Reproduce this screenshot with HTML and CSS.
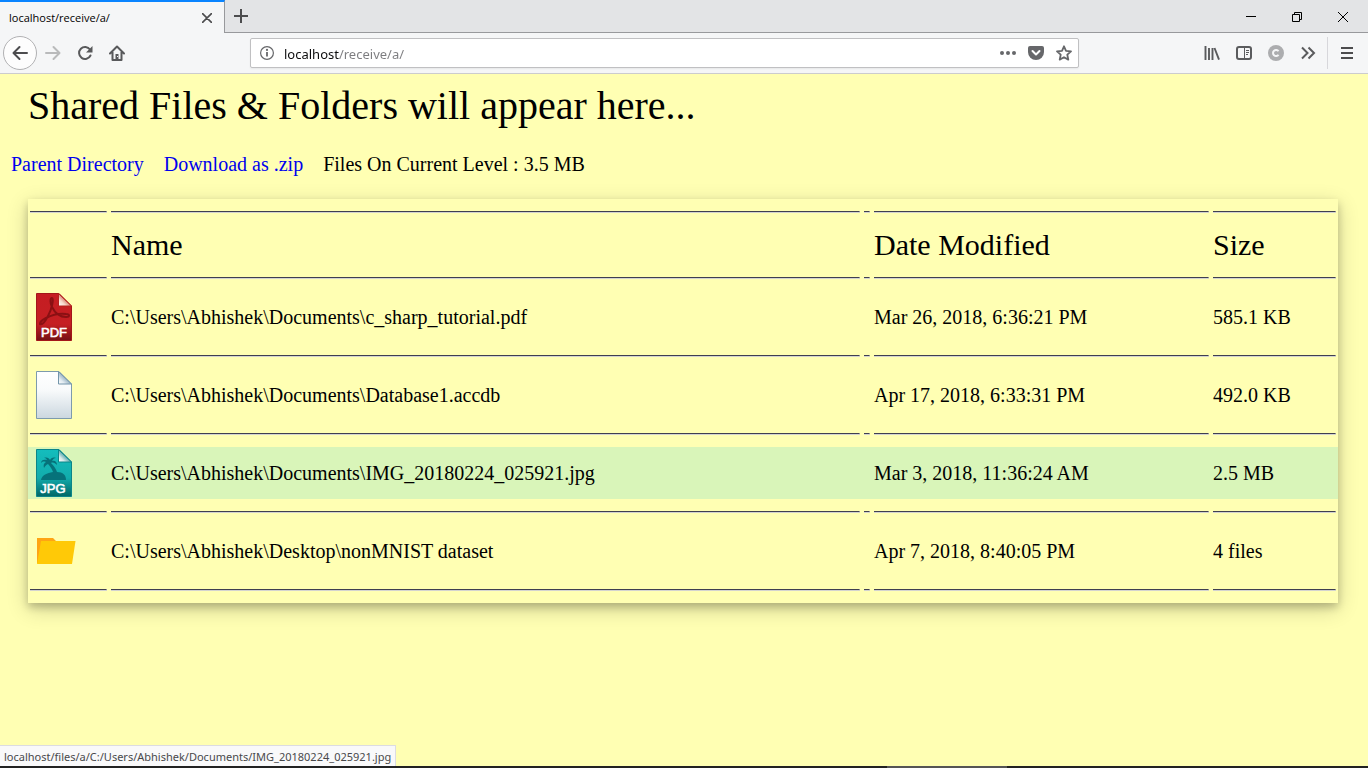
FILE: index.html
```html
<!DOCTYPE html>
<html lang="en">
<head>
<meta charset="utf-8">
<title>localhost/receive/a/</title>
<link rel="stylesheet" href="styles.css">
</head>
<body>
<header class="browser">
  <div class="tabstrip">
    <div class="tab">
      <span class="tab-title">localhost/receive/a/</span>
      <button class="icon-button tab-close" aria-label="Close tab"><svg width="10" height="10" viewBox="0 0 10 10"><path d="M.5.5l9 9M9.500.5l-9 9" stroke="#4c4c4e" stroke-width="1.600" fill="none" stroke-linecap="round"/></svg></button>
    </div>
    <button class="icon-button new-tab" aria-label="New tab"><svg width="14" height="14" viewBox="0 0 14 14"><path d="M7 0v14M0 7h14" stroke="#4c4c4e" stroke-width="2" fill="none"/></svg></button>
    <div class="window-controls">
      <button class="window-button" aria-label="Minimize"><svg width="10" height="10" viewBox="0 0 10 10"><path d="M0 4.500h10" stroke="#000" fill="none"/></svg></button>
      <button class="window-button" aria-label="Restore"><svg width="10" height="10" viewBox="0 0 10 10"><path d="M.5 2.500h7v7h-7zM2.500 2.500v-2h7v7h-2" stroke="#000" fill="none"/></svg></button>
      <button class="window-button" aria-label="Close"><svg width="10" height="10" viewBox="0 0 10 10"><path d="M0 0l10 10M10 0L0 10" stroke="#000" fill="none"/></svg></button>
    </div>
  </div>
  <div class="toolbar">
    <div class="nav">
      <button class="icon-button back" aria-label="Back"><svg width="16" height="16" viewBox="0 0 16 16"><path d="M15 8H2M7.500 2L1.500 8l6 6" stroke="#4c4c4e" stroke-width="2" fill="none" stroke-linecap="round" stroke-linejoin="round"/></svg></button>
      <button class="icon-button" aria-label="Forward" disabled><svg width="16" height="16" viewBox="0 0 16 16"><path d="M1 8h13M8.500 2l6 6-6 6" stroke="#b9babb" stroke-width="2" fill="none" stroke-linecap="round" stroke-linejoin="round"/></svg></button>
      <button class="icon-button" aria-label="Reload"><svg width="16" height="16" viewBox="0 0 16 16"><path d="M13 4.500A6 6 0 1 0 13.500 10.500" stroke="#58595b" stroke-width="2" fill="none" stroke-linecap="round"/><path d="M15.500 1v6.500H9z" fill="#58595b"/></svg></button>
      <button class="icon-button" aria-label="Home"><svg width="16" height="16" viewBox="0 0 16 16"><path d="M1 8.500l7-7 7 7M3.500 7v8h9V7" stroke="#58595b" stroke-width="2" fill="none" stroke-linecap="round" stroke-linejoin="round"/><path d="M6.500 9h3v6h-3z" fill="#58595b"/><path d="M8.500 11v1" stroke="#f5f6f7"/></svg></button>
    </div>
    <div class="urlbar">
      <svg width="14" height="14" viewBox="0 0 14 14"><circle cx="7" cy="7" r="6.400" fill="none" stroke="#66676a" stroke-width="1.200"/><path d="M7 6v4.500" stroke="#66676a" stroke-width="1.800"/><circle cx="7" cy="3.900" r="1.100" fill="#66676a"/></svg>
      <input class="url" type="text" aria-label="Address" value="localhost/receive/a/">
      <button class="icon-button page-action" aria-label="Page actions"><svg width="16" height="16" viewBox="0 0 16 16"><g fill="#66676a"><circle cx="2" cy="8" r="2"/><circle cx="8" cy="8" r="2"/><circle cx="14" cy="8" r="2"/></g></svg></button>
      <button class="icon-button page-action" aria-label="Save to Pocket"><svg width="16" height="16" viewBox="0 0 16 16"><path d="M2 1h12a2 2 0 0 1 2 2v4a8 8 0 0 1-16 0V3a2 2 0 0 1 2-2z" fill="#66676a"/><path d="M4.500 6L8 9.500 11.500 6" stroke="#fff" stroke-width="2" fill="none" stroke-linecap="round" stroke-linejoin="round"/></svg></button>
      <button class="icon-button page-action" aria-label="Bookmark"><svg width="16" height="16" viewBox="0 0 16 16"><path d="M8 1.300l2 4.500 5 .500-3.700 3.400 1 4.900L8 12.200l-4.300 2.400 1-4.900L1 6.300l5-.5z" stroke="#66676a" stroke-width="1.800" fill="none" stroke-linejoin="round"/></svg></button>
    </div>
    <div class="tools">
      <button class="icon-button" aria-label="Library"><svg width="16" height="16" viewBox="0 0 16 16"><path d="M1.500 1v14M5 3v12M8.500 3v12M10.500 3l4.500 11.700" stroke="#5a5b5d" stroke-width="1.900" fill="none"/></svg></button>
      <button class="icon-button" aria-label="Sidebars"><svg width="16" height="16" viewBox="0 0 16 16"><rect x="1" y="2" width="14" height="12" rx="2" stroke="#5a5b5d" stroke-width="2" fill="none"/><path d="M8.500 2v12" stroke="#5a5b5d"/><path d="M10 5.500h3M10 7.500h3M10 9.500h2" stroke="#5a5b5d"/></svg></button>
      <button class="icon-button" aria-label="Extension"><svg width="16" height="16" viewBox="0 0 16 16"><circle cx="8" cy="8" r="8" fill="#acadaf"/><path d="M10.500 6.300a3 3 0 1 0 0 3.400" stroke="#f5f6f7" stroke-width="2" fill="none"/></svg></button>
      <button class="icon-button" aria-label="More tools"><svg width="16" height="16" viewBox="0 0 16 16"><path d="M2 2.500L7.500 8 2 13.500M8.500 2.500L14 8l-5.500 5.500" stroke="#5a5b5d" stroke-width="2" fill="none"/></svg></button>
      <button class="icon-button menu" aria-label="Open menu"><svg width="16" height="16" viewBox="0 0 16 16"><path d="M2 3h12M2 8h12M2 13h12" stroke="#4c4c4e" stroke-width="2"/></svg></button>
    </div>
  </div>
</header>

<main class="page">
  <h1 class="heading">Shared Files &amp; Folders will appear here...</h1>
  <nav class="actions">
    <a href="#parent">Parent Directory</a>
    <a href="#zip">Download as .zip</a>
    <span>Files On Current Level : 3.5 MB</span>
  </nav>
  <table class="files">
    <colgroup><col class="col-icon"><col><col class="col-gap"><col class="col-date"><col class="col-size"></colgroup>
    <thead>
      <tr class="rule"><td><hr></td><td><hr></td><td><hr></td><td><hr></td><td><hr></td></tr>
      <tr class="titles"><td></td><th scope="col">Name</th><td></td><th scope="col">Date Modified</th><th scope="col">Size</th></tr>
      <tr class="rule"><td><hr></td><td><hr></td><td><hr></td><td><hr></td><td><hr></td></tr>
    </thead>
    <tbody>
      <tr class="file">
        <td><svg class="file-icon" viewBox="0 0 48 48" role="img" aria-label="PDF file">
          <defs>
            <linearGradient id="red" x2="0" y2="1"><stop offset="0" stop-color="#c51d22"/><stop offset=".65" stop-color="#c51f23"/><stop offset="1" stop-color="#751114"/></linearGradient>
            <linearGradient id="redfold" x1="0" y1="1" x2="1" y2="0"><stop offset="0" stop-color="#fff"/><stop offset=".3" stop-color="#f6d8ca"/><stop offset=".65" stop-color="#c54a38"/></linearGradient>
          </defs>
          <path d="M6.500.5H29l12.500 12.500v34.500h-35z" fill="url(#red)" stroke="#a3171a"/>
          <path d="M28.500.5v12.500h13z" fill="url(#redfold)" stroke="#b5221f"/>
          <path d="M22 5c-2 0-2 5 0 9 3 6 8 10 14 10 4 0 4-3 0-3-7-1-14 1-20 4-4 2-6 4-6 6 2 1 5-2 8-8 4-7 6-18 4-18z" fill="none" stroke="#8a1013" stroke-width="2" stroke-linejoin="round"/>
          <text class="file-label" x="24" y="44" text-anchor="middle">PDF</text>
        </svg></td>
        <td>C:\Users\Abhishek\Documents\c_sharp_tutorial.pdf</td><td></td><td>Mar 26, 2018, 6:36:21 PM</td><td>585.1 KB</td>
      </tr>
      <tr class="rule"><td><hr></td><td><hr></td><td><hr></td><td><hr></td><td><hr></td></tr>
      <tr class="file">
        <td><svg class="file-icon" viewBox="0 0 48 48" role="img" aria-label="File">
          <defs>
            <linearGradient id="paper" x2="0" y2="1"><stop offset="0" stop-color="#fff"/><stop offset=".4" stop-color="#f8fafb"/><stop offset="1" stop-color="#cbd7df"/></linearGradient>
            <linearGradient id="paperfold" x1="0" y1="1" x2="1" y2="0"><stop offset="0" stop-color="#fff"/><stop offset=".25" stop-color="#e2ebf1"/><stop offset=".6" stop-color="#7f9fb3"/></linearGradient>
          </defs>
          <path d="M6.500.5H29l12.500 12.500v34.500h-35z" fill="url(#paper)" stroke="#7d9bad"/>
          <path d="M28.500.5v12.500h13z" fill="url(#paperfold)" stroke="#7395aa"/>
        </svg></td>
        <td>C:\Users\Abhishek\Documents\Database1.accdb</td><td></td><td>Apr 17, 2018, 6:33:31 PM</td><td>492.0 KB</td>
      </tr>
      <tr class="rule"><td><hr></td><td><hr></td><td><hr></td><td><hr></td><td><hr></td></tr>
      <tr class="file active">
        <td><svg class="file-icon" viewBox="0 0 48 48" role="img" aria-label="JPG file">
          <defs>
            <linearGradient id="teal" x2="0" y2="1"><stop offset="0" stop-color="#14bdbd"/><stop offset=".6" stop-color="#12acac"/><stop offset="1" stop-color="#066"/></linearGradient>
            <linearGradient id="tealfold" x1="0" y1="1" x2="1" y2="0"><stop offset="0" stop-color="#fff"/><stop offset=".25" stop-color="#d8e9ea"/><stop offset=".6" stop-color="#2a8f94"/></linearGradient>
          </defs>
          <path d="M6.500.5H29l12.500 12.500v34.500h-35z" fill="url(#teal)" stroke="#0b8588"/>
          <path d="M28.500.5v12.500h13z" fill="url(#tealfold)" stroke="#0b8588"/>
          <path d="M11 31c1-5 6-7 12-8-1-3-3-6-5-8-2 1-3 2-4 4-1-3 0-5 2-6-3-1-4 0-5 1 0-3 3-4 6-3-1-2-2-2-3-2 3-1 5 0 6 2 1-2 3-3 6-2-2 0-3 1-4 3 3-1 5 1 5 4-2-2-4-3-6-2 3 3 5 6 6 9 6 0 9 3 9 8z" fill="#06727a"/>
          <text class="file-label" x="23" y="44" text-anchor="middle">JPG</text>
        </svg></td>
        <td>C:\Users\Abhishek\Documents\IMG_20180224_025921.jpg</td><td></td><td>Mar 3, 2018, 11:36:24 AM</td><td>2.5 MB</td>
      </tr>
      <tr class="rule"><td><hr></td><td><hr></td><td><hr></td><td><hr></td><td><hr></td></tr>
      <tr class="file">
        <td><svg class="file-icon" viewBox="0 0 48 48" role="img" aria-label="Folder"><path d="M7 11h16l3 3h13v22H7z" fill="#ffa414"/><path d="M11 14h34.500l-3.500 23H7z" fill="#ffc907"/></svg></td>
        <td>C:\Users\Abhishek\Desktop\nonMNIST dataset</td><td></td><td>Apr 7, 2018, 8:40:05 PM</td><td>4 files</td>
      </tr>
      <tr class="rule"><td><hr></td><td><hr></td><td><hr></td><td><hr></td><td><hr></td></tr>
    </tbody>
  </table>
  <div class="status">localhost/files/a/C:/Users/Abhishek/Documents/IMG_20180224_025921.jpg</div>
</main>
<footer class="taskbar"><span class="taskbar-item"></span></footer>
</body>
</html>
```

FILE: styles.css
```css
* { box-sizing: border-box; }

body {
  margin: 0;
  min-height: 100vh;
  display: flex;
  flex-direction: column;
  background: #ffffb3;
  color: #000;
  font-family: "Liberation Serif", serif;
  font-size: 20px;
}

svg { display: block; flex: none; }

.browser {
  background: #f5f6f7;
  border-bottom: 1px solid #ccccce;
  font-family: "Open Sans", "Noto Sans", sans-serif;
}

.icon-button, .window-button {
  display: flex;
  align-items: center;
  justify-content: center;
  padding: 0;
  border: 0;
  background: none;
}

.icon-button { width: 32px; height: 32px; }

.tabstrip {
  display: flex;
  height: 33px;
  background: #e3e4e6;
}

.tab {
  display: flex;
  align-items: center;
  justify-content: space-between;
  width: 225px;
  padding-left: 9px;
  border-top: 2px solid #0a84ff;
  border-right: 1px solid #98999c;
  background: #f5f6f7;
  font-size: 11px;
}

.tab-close { width: 34px; }
.new-tab, .window-controls { border-bottom: 1px solid #98999c; }
.new-tab { height: 33px; }

.window-controls {
  display: flex;
  flex: 1;
  justify-content: flex-end;
  padding-right: 2px;
}

.window-button { width: 46px; height: 33px; }

.toolbar {
  display: flex;
  align-items: center;
  height: 40px;
}

.nav {
  display: flex;
  align-items: center;
  flex: 0 0 250px;
  padding-left: 3px;
}

.back {
  width: 34px;
  height: 34px;
  border: 1px solid #b1b1b3;
  border-radius: 50%;
  background: #fdfdfd;
}

.urlbar {
  display: flex;
  align-items: center;
  flex: 1;
  height: 30px;
  padding: 0 0 0 9px;
  border: 1px solid #c0c0c2;
  border-radius: 2px;
  background: #fff;
  box-shadow: 0 1px 2px rgba(0, 0, 0, .06);
}

.url {
  flex: 1;
  min-width: 0;
  margin-left: 10px;
  padding: 2px 0 0;
  border: 0;
  outline: 0;
  background: linear-gradient(to right, #0c0c0d 55px, #7c7c7f 55px);
  background-clip: text;
  -webkit-background-clip: text;
  color: transparent;
  font: 13px "Noto Sans", "Open Sans", sans-serif;
}

.page-action { width: 28px; }

.tools {
  display: flex;
  align-items: center;
  flex: 0 0 289px;
  justify-content: flex-end;
  padding-right: 2px;
}

.menu {
  width: 39px;
  margin-left: 3px;
  border-left: 1px solid #d7d7db;
}

.page {
  position: relative;
  flex: 1;
}

.heading {
  margin: 9px 28px 0;
  font-size: 40px;
  font-weight: 400;
  line-height: 46px;
}

.actions {
  display: flex;
  gap: 20px;
  margin: 24px 11px 0;
  line-height: 22px;
}

.actions a { color: #00e; text-decoration: none; }

.files {
  width: calc(100% - 58px);
  margin: 24px 30px 0 28px;
  border-collapse: collapse;
  table-layout: fixed;
  box-shadow: 0 4px 8px rgba(0, 0, 0, .2), 0 6px 20px rgba(0, 0, 0, .19);
}

.col-icon { width: 81px; }
.col-gap { width: 10px; }
.col-date { width: 339px; }
.col-size { width: 127px; }

.files td, .files th {
  padding: 0 2px;
  text-align: left;
  vertical-align: middle;
}

.rule { height: 26px; }

.files hr {
  height: 2px;
  margin: 0;
  border: 0;
  border-top: 1px solid #3f3f50;
  border-right: 1px solid #d5d5c8;
  background: #d3d3cf;
}

.titles { height: 40px; }
.titles th { font-size: 30px; font-weight: 400; line-height: 40px; }
.file { height: 52px; line-height: 24px; }
.active { background: #d9f5b9; }
.file-icon { width: 48px; height: 48px; }

.file-label {
  fill: #fff;
  stroke: #fff;
  stroke-width: 0.6px;
  font: 13px "Liberation Sans", sans-serif;
}

.status {
  position: absolute;
  bottom: 0;
  left: 0;
  height: 21px;
  padding: 0 4px;
  border: 1px solid #dcdce2;
  border-width: 1px 1px 0 0;
  background: #f9f9fa;
  color: #48484a;
  font: 11px/22px "Noto Sans", "Open Sans", sans-serif;
}

.taskbar {
  display: flex;
  justify-content: center;
  height: 2px;
  padding-left: 525px;
  background: #222;
}

.taskbar-item { width: 120px; background: #555; }
```
